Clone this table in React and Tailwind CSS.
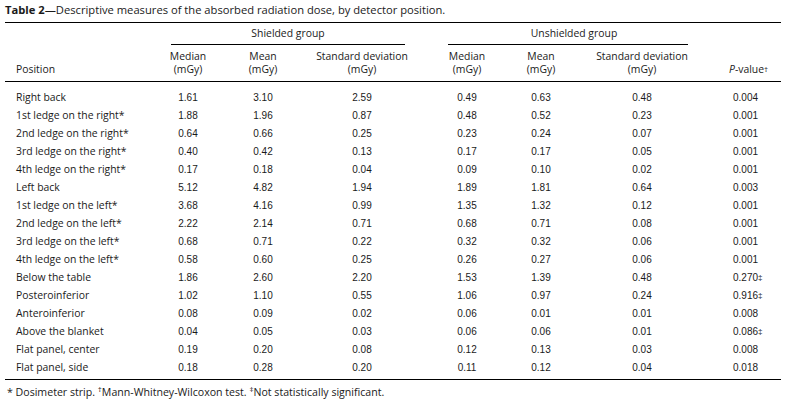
import React from "react";

const rows = [
  ["Right back", "1.61", "3.10", "2.59", "0.49", "0.63", "0.48", "0.004", ""],
  ["1st ledge on the right*", "1.88", "1.96", "0.87", "0.48", "0.52", "0.23", "0.001", ""],
  ["2nd ledge on the right*", "0.64", "0.66", "0.25", "0.23", "0.24", "0.07", "0.001", ""],
  ["3rd ledge on the right*", "0.40", "0.42", "0.13", "0.17", "0.17", "0.05", "0.001", ""],
  ["4th ledge on the right*", "0.17", "0.18", "0.04", "0.09", "0.10", "0.02", "0.001", ""],
  ["Left back", "5.12", "4.82", "1.94", "1.89", "1.81", "0.64", "0.003", ""],
  ["1st ledge on the left*", "3.68", "4.16", "0.99", "1.35", "1.32", "0.12", "0.001", ""],
  ["2nd ledge on the left*", "2.22", "2.14", "0.71", "0.68", "0.71", "0.08", "0.001", ""],
  ["3rd ledge on the left*", "0.68", "0.71", "0.22", "0.32", "0.32", "0.06", "0.001", ""],
  ["4th ledge on the left*", "0.58", "0.60", "0.25", "0.26", "0.27", "0.06", "0.001", ""],
  ["Below the table", "1.86", "2.60", "2.20", "1.53", "1.39", "0.48", "0.270", "‡"],
  ["Posteroinferior", "1.02", "1.10", "0.55", "1.06", "0.97", "0.24", "0.916", "‡"],
  ["Anteroinferior", "0.08", "0.09", "0.02", "0.06", "0.01", "0.01", "0.008", ""],
  ["Above the blanket", "0.04", "0.05", "0.03", "0.06", "0.06", "0.01", "0.086", "‡"],
  ["Flat panel, center", "0.19", "0.20", "0.08", "0.12", "0.13", "0.03", "0.008", ""],
  ["Flat panel, side", "0.18", "0.28", "0.20", "0.11", "0.12", "0.04", "0.018", ""],
];

const grid = "grid grid-cols-[153px_60px_90px_108px_102px_46px_156px_61px]";
const label = "font-['Open_Sans',sans-serif]";
const num = "font-['Liberation_Sans',Arial,sans-serif] text-[10px]";

function Head2({ a }) {
  return (
    <div className="flex flex-col items-center justify-center text-center leading-[13px]">
      <span>{a}</span>
      <span>(mGy)</span>
    </div>
  );
}

export default function App() {
  return (
    <div className={`w-[790px] h-[407px] bg-white text-[#1a1a1a] text-[10.4px] px-[5px] pt-[3px] ${label}`}>
      <div className="leading-[13px] text-[11.2px]">
        <span className="font-bold">Table 2</span>—Descriptive measures of the absorbed radiation dose, by detector position.
      </div>
      <div className="w-[776px] mt-[6px] border-t border-black">
        <div className={`${grid} h-[22px]`}>
          <div />
          <div className="col-span-3 pl-[13px] pr-[11px]">
            <div className="h-[22px] border-b border-black flex items-center justify-center">Shielded group</div>
          </div>
          <div className="col-span-3 pl-[32px] pr-[32px]">
            <div className="h-[22px] border-b border-black flex items-center justify-center pl-[12px]">Unshielded group</div>
          </div>
          <div />
        </div>
        <div className={`${grid} h-[37px] border-b border-black`}>
          <div className="flex items-end pl-[11px] pb-[5px] leading-[13px]">Position</div>
          <Head2 a="Median" />
          <Head2 a="Mean" />
          <Head2 a="Standard deviation" />
          <Head2 a="Median" />
          <Head2 a="Mean" />
          <Head2 a="Standard deviation" />
          <div className="flex items-end pl-[9px] pb-[5px] leading-[13px]">
            <span><i>P</i>-value<sup className="text-[8px] relative -top-[1px]">†</sup></span>
          </div>
        </div>
        <div className="pt-[6px] pb-[3px] border-b border-black">
          {rows.map((r, i) => (
            <div key={i} className={`${grid} h-[18px] items-center leading-[13px]`}>
              <div className="pl-[11px]">{r[0]}</div>
              {r.slice(1, 7).map((v, j) => (
                <div key={j} className={`text-center ${num}`}>{v}</div>
              ))}
              <div className={`pl-[13px] ${num}`}>
                {r[7]}
                {r[8] && <sup className="text-[8px] relative -top-[1px]">{r[8]}</sup>}
              </div>
            </div>
          ))}
        </div>
      </div>
      <div className="mt-[6px] leading-[13px] pl-[2px] text-[10.6px]">
        * Dosimeter strip. <sup className="text-[8px]">†</sup>Mann-Whitney-Wilcoxon test. <sup className="text-[8px]">‡</sup>Not statistically significant.
      </div>
    </div>
  );
}
